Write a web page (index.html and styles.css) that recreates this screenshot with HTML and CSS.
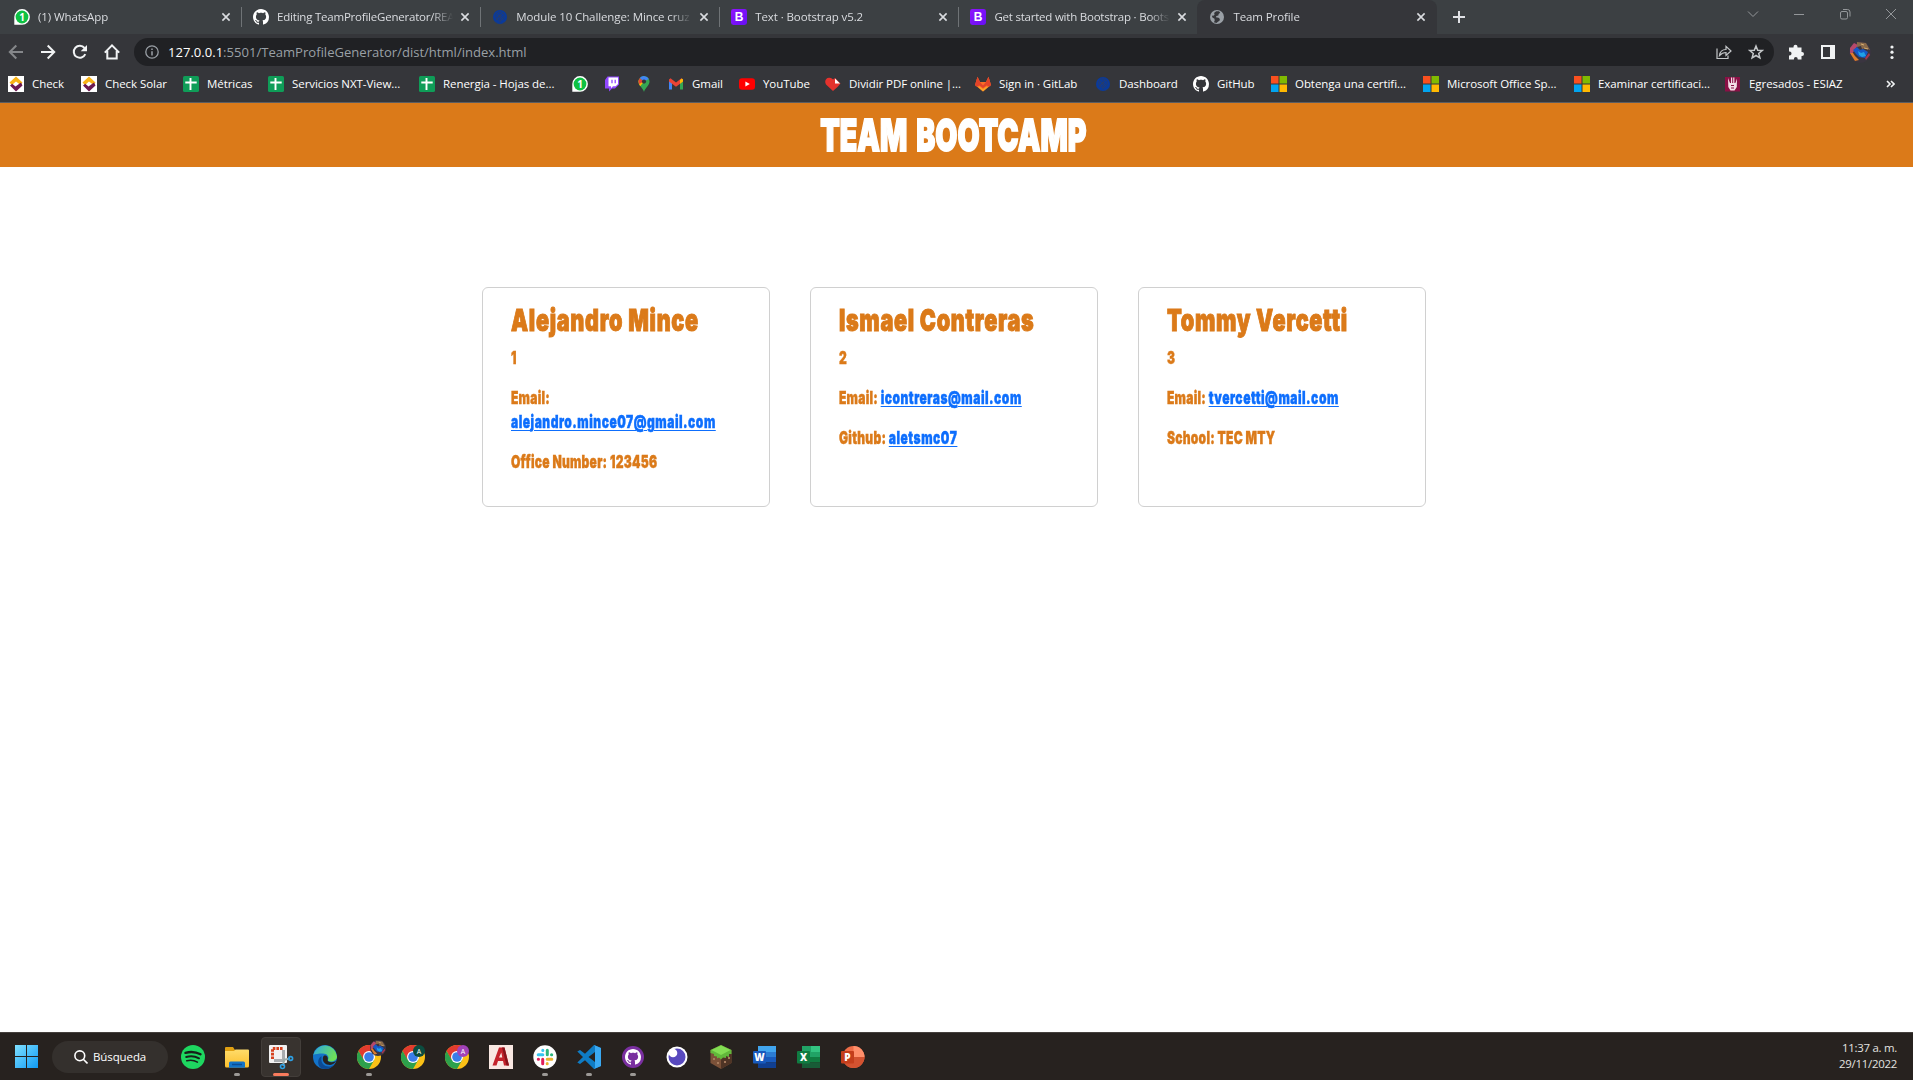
FILE: index.html
```html
<!DOCTYPE html>
<html lang="es">
<head>
<meta charset="utf-8">
<title>Team Profile</title>
<link rel="stylesheet" href="styles.css">
</head>
<body>
<svg class="defs" width="0" height="0" aria-hidden="true">
  <defs>
    <linearGradient id="gWin" x1="0" y1="0" x2="1" y2="1"><stop offset="0" stop-color="#7fe0ff"/><stop offset="1" stop-color="#0f9bf5"/></linearGradient>
    <linearGradient id="gEdge" x1="0" y1="0" x2="1" y2=".4"><stop offset="0" stop-color="#2aa5e6"/><stop offset="1" stop-color="#6de05a"/></linearGradient>
    <linearGradient id="gFold" x1="0" y1="0" x2="0" y2="1"><stop offset="0" stop-color="#ffdc6b"/><stop offset="1" stop-color="#fcbf2c"/></linearGradient>
    <linearGradient id="gBs" x1="0" y1="0" x2="1" y2="1"><stop offset="0" stop-color="#9013fe"/><stop offset="1" stop-color="#6610f2"/></linearGradient>
  </defs>
  <symbol id="wa" viewBox="0 0 16 16"><path d="M.3 15.700V8A7.800 7.800 0 1 1 8 15.700z" fill="#fff"/><circle cx="8" cy="8" r="6.400" fill="#0fc143"/></symbol>
  <symbol id="gh" viewBox="0 0 16 16"><path fill="currentColor" d="M8 0C3.58 0 0 3.58 0 8c0 3.54 2.29 6.53 5.47 7.59.4.07.55-.17.55-.38 0-.19-.01-.82-.01-1.49-2.01.37-2.53-.49-2.69-.94-.09-.23-.48-.94-.82-1.13-.28-.15-.68-.52-.01-.53.63-.01 1.08.58 1.23.82.72 1.21 1.87.87 2.33.66.07-.52.28-.87.51-1.07-1.78-.2-3.64-.89-3.64-3.95 0-.87.31-1.59.82-2.15-.08-.2-.36-1.02.08-2.12 0 0 .67-.21 2.2.82.64-.18 1.32-.27 2-.27s1.36.09 2 .27c1.53-1.04 2.2-.82 2.2-.82.44 1.1.16 1.92.08 2.12.51.56.82 1.27.82 2.15 0 3.07-1.87 3.75-3.65 3.95.29.25.54.73.54 1.48 0 1.07-.01 1.93-.01 2.2 0 .21.15.46.55.38A8.01 8.01 0 0 0 16 8c0-4.42-3.58-8-8-8z"/></symbol>
  <symbol id="tec" viewBox="0 0 16 16"><circle cx="8" cy="8" r="7" fill="#0a3a9b"/><g fill="none" stroke="#2b3d66" stroke-width=".7"><circle cx="8" cy="7" r="4.400"/><path d="M5 5l6 6M11 4l-7 7M8 3v11M5 9q3-5 6 0M3.500 13l2 1.500M12.500 13l-2 1.500"/></g></symbol>
  <symbol id="bs" viewBox="0 0 16 16"><rect width="16" height="16" rx="2.400" fill="url(#gBs)"/></symbol>
  <symbol id="globe" viewBox="0 0 16 16"><circle cx="8" cy="8" r="7" fill="#9aa0a6"/><path d="M7.200 2.300 10 2.200l1.200 1.600-1.600 1.300-.2 1.500-2 .5-.5 1.200 2.700.4 1.300 1.300-.4 1.700-1.600 1-1.400 1.400-2.700-.9.900-1.500-.2-2-2.100-1.300-.5-1.600L5 6.500l.6-1.200L5 4z" fill="#35363a"/></symbol>
  <symbol id="x" viewBox="0 0 10 10"><path d="M1.400 1.400l7.200 7.200M8.600 1.400 1.400 8.600" stroke="#dadce0" stroke-width="1.600"/></symbol>
  <symbol id="check" viewBox="0 0 16 16"><path d="M0 0h16v16H0z" fill="#fff"/><path d="M1.500 6.500 8 .4 14.500 6.500 12.500 9 8 5.600 4 9z" fill="#f9b316"/><path d="M2 9.500 4.200 7.800 7.500 10.500 13 6.500 14.500 9.500 8 15.600z" fill="#6d1a52"/></symbol>
  <symbol id="sheet" viewBox="0 0 16 16"><rect width="16" height="16" rx="1.600" fill="#0f9d58"/><path d="M2.300 6.500h11.400M7.500 2v12" stroke="#fff" stroke-width="1.900"/></symbol>
  <symbol id="ms" viewBox="0 0 16 16"><path d="M0 0h7.500v7.500H0z" fill="#f9501f"/><path d="M8.500 0H16v7.500H8.500z" fill="#80ba01"/><path d="M0 8.500h7.500V16H0z" fill="#02a4ef"/><path d="M8.500 8.500H16V16H8.500z" fill="#ffb902"/></symbol>
  <symbol id="chrome" viewBox="0 0 24 24"><circle cx="12" cy="12" r="12" fill="#fbc116"/><path d="M12 12 22.400 6A12 12 0 0 0 1.600 6l4.800 9z" fill="#e33b2e"/><path d="M1.600 6A12 12 0 0 0 12 24l5.200-9-5.200-3-5.200 3z" fill="#2da14c"/><circle cx="12" cy="12" r="6" fill="#fff"/><circle cx="12" cy="12" r="4.800" fill="#3b7de9"/></symbol>
  <symbol id="photo" viewBox="0 0 22 22"><circle cx="11" cy="11" r="11" fill="#3a3540"/><path d="M1 7 5 2l4 2-6 9-2-1z" fill="#b5486a"/><path d="M8 1l9 1 4 7-5-2-3 1-1-3-4 1z" fill="#8a6a4a"/><path d="M12 3l3 1M15 7l4 1" stroke="#d8b070" stroke-width="1"/><path d="M4 9l4-3 3 3 3-1 5 3-3 6-6-1-3-3z" fill="#1558c8"/><path d="M9 10l3 2 3-1 2 4-4 1-3-2z" fill="#1fa0e8"/><path d="M1 12l3 0 2 3 4 4-4 1z" fill="#e07b28"/><path d="M16 17l4-5 1 2-4 5z" fill="#a53650"/></symbol>
</svg>

<div class="browser">
  <div class="tabstrip">
    <div class="tab"><svg class="fav" viewBox="0 0 16 16"><use href="#wa"/><text class="wa-count" x="8" y="11.600">1</text></svg><span class="tab-title">(1) WhatsApp</span><svg class="close"><use href="#x"/></svg></div>
    <div class="tab"><svg class="fav white"><use href="#gh"/></svg><span class="tab-title tight">Editing TeamProfileGenerator/REA</span><svg class="close"><use href="#x"/></svg></div>
    <div class="tab"><svg class="fav"><use href="#tec"/></svg><span class="tab-title">Module 10 Challenge: Mince cruz</span><svg class="close"><use href="#x"/></svg></div>
    <div class="tab"><svg class="fav" viewBox="0 0 16 16"><use href="#bs"/><text class="bs-letter" x="8" y="12.200">B</text></svg><span class="tab-title">Text · Bootstrap v5.2</span><svg class="close"><use href="#x"/></svg></div>
    <div class="tab last"><svg class="fav" viewBox="0 0 16 16"><use href="#bs"/><text class="bs-letter" x="8" y="12.200">B</text></svg><span class="tab-title tight">Get started with Bootstrap · Boots</span><svg class="close"><use href="#x"/></svg></div>
    <div class="tab active"><svg class="fav"><use href="#globe"/></svg><span class="tab-title">Team Profile</span><svg class="close"><use href="#x"/></svg></div>
    <svg class="plus" viewBox="0 0 14 14"><path d="M7 1v12M1 7h12" stroke="#dfe1e5" stroke-width="2"/></svg>
    <div class="window-controls">
      <svg viewBox="0 0 12 12"><path d="M1 3.500l5 5 5-5"/></svg>
      <svg viewBox="0 0 12 12"><path d="M1 6.500h10"/></svg>
      <svg viewBox="0 0 12 12"><rect x="1.500" y="3.500" width="7" height="7.500" rx="1.500"/><path d="M4 1.500h4.500q2.500 0 2.500 2.500v4.500"/></svg>
      <svg viewBox="0 0 12 12"><path d="M1 1l10 10M11 1 1 11"/></svg>
    </div>
  </div>

  <div class="toolbar">
    <div class="nav">
      <svg class="dim" viewBox="0 0 16 16"><path d="M15 8H2M8.300 1.500 1.800 8l6.500 6.500"/></svg>
      <svg viewBox="0 0 16 16"><path d="M1 8h13M7.700 1.500 14.200 8l-6.500 6.500"/></svg>
      <svg viewBox="0 0 16 16"><path d="M13.300 10.200A6 6 0 1 1 12.500 4"/><path d="M15 1v6.300H8.700z" fill="#f1f3f4" stroke="none"/></svg>
      <svg viewBox="0 0 16 16"><path d="M.8 8.600 8 1.400l7.200 7.200M3.300 7v7.600h9.400V7"/></svg>
    </div>
    <div class="omnibox">
      <svg class="info" viewBox="0 0 14 14"><circle cx="7" cy="7" r="6.200" fill="none" stroke="#9aa0a6" stroke-width="1.300"/><path d="M7 6.200v4.300M7 3.400v1.500" stroke="#9aa0a6" stroke-width="1.500"/></svg>
      <span class="url"><b>127.0.0.1</b>:5501/TeamProfileGenerator/dist/html/index.html</span>
      <svg class="share" viewBox="0 0 16 16"><path d="M1 4.500v10h11v-3M3.500 11.500c.5-4 2.500-6 6.500-6V2.300l5 4.700-5 4.500V8.500c-3 0-4.500.8-6.500 3z"/></svg>
      <svg class="star" viewBox="0 0 16 16"><path d="M8 2l1.700 4.200 4.500.3-3.500 2.900 1.200 4.500L8 11.500l-3.900 2.400 1.200-4.500L1.800 6.500l4.500-.3z"/></svg>
    </div>
    <div class="actions">
      <svg viewBox="0 0 16 16"><path fill="#f1f3f4" d="M1 3.500h4.500v-.8a2 2 0 0 1 4 0v.8h4V8h.5a2 2 0 0 1 0 4h-.5v3.500H9.700V15a1.900 1.900 0 0 0-3.800 0v.5H1v-4h.6a1.900 1.900 0 0 0 0-3.900H1z"/></svg>
      <svg viewBox="0 0 16 16"><path fill="#f1f3f4" fill-rule="evenodd" d="M1 1h14v14H1zm2 2v10h7V3z"/></svg>
      <svg class="avatar"><use href="#photo"/></svg>
      <svg viewBox="0 0 16 16"><g fill="#f1f3f4"><circle cx="8" cy="3" r="1.600"/><circle cx="8" cy="8.200" r="1.600"/><circle cx="8" cy="13.500" r="1.600"/></g></svg>
    </div>
  </div>

  <div class="bookmarks">
    <div class="bm"><svg><use href="#check"/></svg><span>Check</span></div>
    <div class="bm"><svg><use href="#check"/></svg><span>Check Solar</span></div>
    <div class="bm"><svg><use href="#sheet"/></svg><span>Métricas</span></div>
    <div class="bm"><svg><use href="#sheet"/></svg><span>Servicios NXT-View...</span></div>
    <div class="bm"><svg><use href="#sheet"/></svg><span>Renergia - Hojas de...</span></div>
    <div class="bm"><svg viewBox="0 0 16 16"><use href="#wa"/><text class="wa-count" x="8" y="11.600">1</text></svg></div>
    <div class="bm"><svg viewBox="0 0 16 16"><path d="M3.500.5h11.500v8l-4 4H8l-3 3v-3H1V4z" fill="#9146ff"/><path d="M4.500 1.500H14V8l-2.300 2.300H9l-2 2v-2H4.500z" fill="#fff"/><path d="M8 3.800v3.500M11.200 3.800v3.500" stroke="#9146ff" stroke-width="1.300"/></svg></div>
    <div class="bm"><svg viewBox="0 0 16 16"><path d="M8 16C7 12 2.500 9.500 2.500 5.600A5.500 5.500 0 0 1 13.500 5.600C13.500 9.500 9 12 8 16z" fill="#34a853"/><path d="M2.900 3.500 8 5.600 4.200 10.200C3 8.500 2 6 2.900 3.500z" fill="#fbbc04"/><path d="M3.800 2 8 5.600 3 8Q1.800 4.500 3.800 2z" fill="#ea4335"/><path d="M3.800 2A5.500 5.500 0 0 1 12.800 3L8 5.600z" fill="#4285f4"/><circle cx="8" cy="5.600" r="2.100" fill="#35363a"/></svg></div>
    <div class="bm"><svg viewBox="0 0 16 16"><path d="M1 3.500v10h3V7z" fill="#4285f4"/><path d="M15 3.500v10h-3V7z" fill="#34a853"/><path d="M1 3.500 2.500 2.300 8 6.600l5.500-4.300L15 3.500v2L8 10.800 1 5.500z" fill="#ea4335"/><path d="M12 4v3.700l3-2.200v-2L13.800 2.500z" fill="#fbbc04"/></svg><span>Gmail</span></div>
    <div class="bm"><svg viewBox="0 0 16 16"><rect y="2.300" width="16" height="11.400" rx="3" fill="#f00"/><path d="M6.400 5.500v5L10.800 8z" fill="#fff"/></svg><span>YouTube</span></div>
    <div class="bm"><svg viewBox="0 0 16 16"><path d="M8 15 1 8.500C-1 5 1 1.500 4.500 1.800 6.500 2 7.500 3 8 3.600L10 2l5.500 5.500-3 3.500z" fill="#e5322d"/><path d="M10 2.500v5h5z" fill="#fff"/></svg><span>Dividir PDF online |...</span></div>
    <div class="bm"><svg viewBox="0 0 16 16"><path d="M0 9 2.500.8 5 6h6L13.500.8 16 9l-8 6.500z" fill="#fc6d26"/><path d="M0 9 2.500.8 5 6l3 3.500L11 6 13.500.8 16 9l-1 1.500-3.500-1L8 12 4.500 9.500 1 10.500z" fill="#e24329"/><path d="M3 11l5 4.500 5-4.500-1.500-.5L8 13l-3.500-2.500z" fill="#fca326"/></svg><span>Sign in · GitLab</span></div>
    <div class="bm"><svg><use href="#tec"/></svg><span>Dashboard</span></div>
    <div class="bm"><svg class="white"><use href="#gh"/></svg><span>GitHub</span></div>
    <div class="bm"><svg><use href="#ms"/></svg><span>Obtenga una certifi...</span></div>
    <div class="bm"><svg><use href="#ms"/></svg><span>Microsoft Office Sp...</span></div>
    <div class="bm"><svg><use href="#ms"/></svg><span>Examinar certificaci...</span></div>
    <div class="bm"><svg viewBox="0 0 16 16"><path d="M0 1h15v14.500H0z" fill="#8a1045"/><path d="M3 2l2 5h1V1.500h1.200V7h1V1.500h1.200V7h1L12 2.500 11.800 11 9.500 14.500h-4L3.300 11z" fill="#f3dde6"/><path d="M6 9.500h3M6 12h3" stroke="#8a1045"/></svg><span>Egresados - ESIAZ</span></div>
    <svg class="more" viewBox="0 0 9 8"><path d="M1 1l3 3-3 3M5 1l3 3-3 3"/></svg>
  </div>
</div>

<main class="page">
  <header class="banner"><h1>TEAM BOOTCAMP</h1></header>
  <section class="cards">
    <article class="card">
      <h2>Alejandro Mince</h2>
      <p>1</p>
      <p>Email:<br><a>alejandro.mince07@gmail.com</a></p>
      <p>Office Number: 123456</p>
    </article>
    <article class="card">
      <h2>Ismael Contreras</h2>
      <p>2</p>
      <p>Email: <a>icontreras@mail.com</a></p>
      <p>Github: <a>aletsmc07</a></p>
    </article>
    <article class="card">
      <h2>Tommy Vercetti</h2>
      <p>3</p>
      <p>Email: <a>tvercetti@mail.com</a></p>
      <p>School: TEC MTY</p>
    </article>
  </section>
</main>

<footer class="taskbar">
  <svg class="start" viewBox="0 0 23 23"><path fill="url(#gWin)" d="M0 0h11v11H0zM12 0h11v11H12zM0 12h11v11H0zM12 12h11v11H12z"/></svg>
  <div class="search"><svg viewBox="0 0 14 14"><circle cx="5.800" cy="5.800" r="4.900"/><path d="M9.300 9.300l4.200 4.200"/></svg><span>Búsqueda</span></div>
  <div class="apps">
    <div class="app"><svg viewBox="0 0 24 24"><circle cx="12" cy="12" r="12" fill="#1ed760"/><g fill="none" stroke="#17201a" stroke-linecap="round"><path d="M4.500 7.800q8-2.300 15 1.500" stroke-width="2.400"/><path d="M5.200 12q6.800-1.900 12.800 1.300" stroke-width="2"/><path d="M5.800 15.800q5.600-1.500 10.600 1.300" stroke-width="1.600"/></g></svg></div>
    <div class="app run"><svg viewBox="0 0 24 24"><path d="M0 3q0-1 1-1h7l2 3v4H0z" fill="#e0a012"/><path d="M0 6h9l1.500-1.500H23q1 0 1 1V21q0 1.500-1.500 1.500h-21Q0 22.500 0 21z" fill="url(#gFold)"/><path d="M4 22.800V18q0-1.500 1.500-1.500h13Q20 16.500 20 18v4.800z" fill="#1373c6"/><path d="M7 19.500h10" stroke="#0a4d94" stroke-width="1.500"/></svg></div>
    <div class="app sel"><svg viewBox="0 0 24 24"><rect y="0" width="18" height="18" rx="1" fill="#f2f2f2"/><path d="M3.500 14V3.500H14" fill="none" stroke="#d6421e" stroke-width="3" stroke-dasharray="2.600 1"/><path d="M14.500 5v10.500H5" fill="none" stroke="#a9adb0" stroke-width="3"/><path d="M14.500 15v6M14 15l7-1.500" stroke="#9aa" stroke-width="2"/><circle cx="13.500" cy="21.500" r="2" fill="none" stroke="#2da0e4" stroke-width="1.600"/><circle cx="21.700" cy="13.500" r="1.900" fill="none" stroke="#2da0e4" stroke-width="1.600"/></svg></div>
    <div class="app"><svg viewBox="0 0 24 24"><circle cx="12" cy="12" r="12" fill="#1373c9"/><path d="M.3 10A12 12 0 0 1 24 11.500c0 3.500-3 5-6 5-2.500 0-3.500-1-3-2 1.500-3-1-6-5-6C5.500 8.500 2 9 .3 10z" fill="url(#gEdge)"/><path d="M8.500 13c-1 5 3 8.500 7.500 8.500 2 0 4-.5 5.700-2.500A12 12 0 0 1 9 23.600C4 21 4 14 8.500 11z" fill="#0c4a93"/><path d="M10.500 11c2.500-1.500 5 1 4.200 3.800-.4 1.600 1.500 2.700 4.300 2.400 2-.3 3.200-.8 4.200-1.200-2 3.200-5.200 4.200-7.700 3.800-4.500-.5-7-5-5-8.800z" fill="#27221f"/></svg></div>
    <div class="app run"><svg class="over" viewBox="0 0 24 24"><use href="#chrome" width="24" height="24"/><use href="#photo" x="13" y="-5" width="16" height="16"/></svg></div>
    <div class="app"><svg class="over" viewBox="0 0 24 24"><use href="#chrome" width="24" height="24"/><circle cx="18" cy="6" r="6" fill="#0b4d40"/><text class="badge" x="18" y="8.600">A</text></svg></div>
    <div class="app"><svg class="over" viewBox="0 0 24 24"><use href="#chrome" width="24" height="24"/><circle cx="18" cy="6" r="6" fill="#a142b8"/><text class="badge" x="18" y="8.600">A</text></svg></div>
    <div class="app"><svg viewBox="0 0 24 24"><path d="M0 0h24v24H0z" fill="#f9e8e2"/><path d="M3.500 20.500 10 2.500h5.500l4.500 18h-5l-1-4.500H9l-1.500 4.500zM10 12.500h3.300l-1-5z" fill="#c4232b" fill-rule="evenodd"/><path d="M15.500 2.500l4.500 18h-2.500L13 2.500z" fill="#86131b"/></svg></div>
    <div class="app run"><svg viewBox="0 0 24 24"><circle cx="12" cy="12" r="11.700" fill="#fff"/><g stroke-width="3" stroke-linecap="round"><path d="M9.800 5.300v.2M5.200 9.700h4.600" stroke="#36c5f0"/><path d="M18.700 9.800h-.2M14.300 5.200v4.600" stroke="#2eb67d"/><path d="M14.200 18.700v-.2M18.800 14.300h-4.600" stroke="#ecb22e"/><path d="M5.300 14.200h.2M9.700 18.800v-4.600" stroke="#e01e5a"/></g></svg></div>
    <div class="app run"><svg viewBox="0 0 24 24"><path d="M17 0l7 3v18l-7 3L8 15.200 3 19 .3 17.500 6 12 .3 6.500 3 5l5 3.800zM18 7l-6.500 5L18 17z" fill="#0f7cc4" fill-rule="evenodd"/><path d="M17 0l7 3v18l-7 3 1-1.500V1.500z" fill="#3aa9f2"/></svg></div>
    <div class="app run"><svg class="gd" viewBox="0 0 24 24"><circle cx="12" cy="12" r="11" fill="#7a2fa0"/><use href="#gh" x="4" y="4" width="16" height="16"/></svg></div>
    <div class="app"><svg viewBox="0 0 24 24"><circle cx="12" cy="12" r="10.500" fill="#fff"/><circle cx="12" cy="12" r="8.500" fill="#5849be"/><circle cx="8" cy="8" r="4.300" fill="#fff"/></svg></div>
    <div class="app"><svg viewBox="0 0 24 24"><path d="M12 0l10.500 5v13L12 24 1.500 18V5z" fill="#7b5138"/><path d="M12 11v13l10.500-6V5z" fill="#4f3425"/><path d="M12 0l10.500 5v4L20 9v3l-3-1v2l-3-.5-2 2-2-2-2 1v-2L5 11V9L1.500 8V5z" fill="#62b83b"/><path d="M12 .5l9.500 4.500-9.500 5-9.500-5z" fill="#83dd53"/><path d="M4 13h2v2H4zM8 17h2v2H8zM15 16h2v2h-2zM19 12h2v2h-2z" fill="#a57a5c"/></svg></div>
    <div class="app"><svg viewBox="0 0 24 24"><path d="M5 1h18v6H5z" fill="#41a5ee"/><path d="M5 7h18v5.500H5z" fill="#2b7cd3"/><path d="M5 12h18v5.500H5z" fill="#185abd"/><path d="M5 17.500h18V23H5z" fill="#103f91"/><rect y="6" width="13" height="12.500" rx="1" fill="#185abd"/><text class="office" x="6.500" y="15.800">W</text></svg></div>
    <div class="app"><svg viewBox="0 0 24 24"><path d="M5 1h9.500v11H5z" fill="#21a366"/><path d="M14 1h9v6h-9z" fill="#33c481"/><path d="M14 7h9v5.500h-9z" fill="#21a366"/><path d="M5 12h18v5.500H5z" fill="#107c41"/><path d="M5 17.500h18V23H5z" fill="#185c37"/><rect y="6" width="13" height="12.500" rx="1" fill="#107c41"/><text class="office" x="6.500" y="15.800">X</text></svg></div>
    <div class="app"><svg viewBox="0 0 24 24"><circle cx="12.500" cy="12" r="11" fill="#ed6c47"/><path d="M12.500 1a11 11 0 0 1 11 11h-11z" fill="#ff8f6b"/><path d="M1.500 12a11 11 0 0 0 22 0z" fill="#d35230"/><rect y="6" width="13" height="12.500" rx="1" fill="#c43e1c"/><text class="office" x="6.500" y="15.800">P</text></svg></div>
  </div>
  <div class="clock"><span>11:37 a. m.</span><span>29/11/2022</span></div>
</footer>
</body>
</html>
```
FILE: styles.css
```css
* { box-sizing: border-box; }
body {
  margin: 0;
  width: 1913px;
  height: 1080px;
  overflow: hidden;
  display: flex;
  flex-direction: column;
  background: #fff;
  font-family: "Open Sans", "Noto Sans", sans-serif;
}
svg { display: block; flex: none; }
.defs { position: absolute; }
.white { color: #fff; }
.wa-count { font-size: 10px; font-weight: 700; fill: #fff; text-anchor: middle; }
.bs-letter { font-family: "Liberation Sans", sans-serif; font-size: 12px; font-weight: 700; fill: #fff; text-anchor: middle; }
.badge { font-size: 7px; fill: #fff; text-anchor: middle; }
.office { font-size: 10px; font-weight: 800; fill: #fff; text-anchor: middle; }

/* Browser chrome */
.browser {
  height: 103px;
  background: #35363a;
  border-bottom: 1px solid #5c5d60;
}
.tabstrip {
  height: 34px;
  display: flex;
  background: #3c4043;
  padding-left: 2px;
}
.tab {
  width: 239.1px;
  height: 34px;
  padding: 0 10px 7px 12px;
  display: flex;
  align-items: center;
  position: relative;
}
.tab:not(.last):not(.active)::after {
  content: "";
  position: absolute;
  right: -1px;
  top: 7px;
  width: 1px;
  height: 20px;
  background: #6f7376;
}
.tab.active {
  background: #35363a;
  border-radius: 8px 8px 0 0;
  width: 240px;
}
.fav { width: 16px; height: 16px; margin-top: 7px; }
.tab-title {
  margin: 7px 0 0 8px;
  width: 176px;
  white-space: nowrap;
  font-size: 11.5px;
  line-height: 18px;
  letter-spacing: -0.1px;
  color: #dadce0;
  -webkit-mask-image: linear-gradient(90deg, #000 155px, transparent 176px);
  mask-image: linear-gradient(90deg, #000 155px, transparent 176px);
}
.tab-title.tight { letter-spacing: -0.22px; }
.close { width: 10px; height: 10px; margin: 7px 0 0 7px; }
.plus { width: 14px; height: 14px; margin: 10px 0 0 15px; }
.window-controls {
  margin: 8px 16px 0 auto;
  display: flex;
  gap: 34px;
}
.window-controls svg {
  width: 12px;
  height: 12px;
  fill: none;
  stroke: #94979a;
  stroke-width: 1;
}
.toolbar {
  height: 36px;
  display: flex;
  align-items: center;
  padding-left: 8px;
}
.nav { display: flex; gap: 16px; width: 126px; }
.nav svg { width: 16px; height: 16px; fill: none; stroke: #f1f3f4; stroke-width: 2; }
.nav .dim { stroke: #85878a; }
.omnibox {
  width: 1640px;
  height: 28px;
  border-radius: 14px;
  background: #202124;
  display: flex;
  align-items: center;
  padding: 0 10px 0 11px;
}
.info { width: 14px; height: 14px; }
.url {
  margin-left: 9px;
  flex: 1;
  font-size: 13.07px;
  line-height: 20px;
  color: #9aa0a6;
  white-space: nowrap;
}
.url b { font-weight: 400; color: #fff; }
.share, .star { width: 16px; height: 16px; fill: none; stroke: #c4c7c9; stroke-width: 1.2; }
.star { margin-left: 16px; stroke-width: 1.5; }
.actions { display: flex; align-items: center; margin-left: 14px; gap: 16px; }
.actions svg { width: 16px; height: 16px; }
.actions .avatar { width: 22px; height: 22px; margin: 0 -3px; }
.bookmarks {
  height: 28px;
  padding-left: 8px;
  display: grid;
  grid-template-columns: 73px 102px 85px 151px 153px 32px 32px 32px 71px 86px 150px 120px 98px 78px 152px 151px 151px 161px 9px;
  align-items: center;
}
.bm { display: flex; align-items: center; gap: 8px; }
.bm svg { width: 16px; height: 16px; }
.bm span {
  font-size: 11.5px;
  line-height: 18px;
  letter-spacing: -0.06px;
  color: #fff;
  white-space: nowrap;
}
.more { width: 9px; height: 8px; fill: none; stroke: #f1f3f4; stroke-width: 1.6; }

/* Page: a heavy sans squeezed horizontally for the poster-style lettering */
.page {
  flex: 1;
  color: #db7a19;
  font-family: Inter, "Open Sans", sans-serif;
  font-weight: 900;
}
.banner {
  height: 64px;
  padding-right: 6px;
  background: #db7a19;
  color: #fff;
  display: flex;
  justify-content: center;
  align-items: center;
}
h1, h2, p { margin: 0; white-space: nowrap; }
h1 {
  font-size: 44.5px;
  font-weight: 900;
  line-height: 54px;
  word-spacing: 5px;
  -webkit-text-stroke: 1.8px currentColor;
  transform: scaleX(0.642);
}
.cards {
  margin-top: 120px;
  padding: 0 5px 0 0;
  display: flex;
  justify-content: center;
  gap: 40px;
}
.card {
  width: 288px;
  height: 220px;
  border: 1px solid #d0d0d0;
  border-radius: 6px;
  padding: 14px 28px;
}
.card h2 {
  font-size: 30px;
  font-weight: 900;
  line-height: 36px;
  margin-bottom: 8px;
  letter-spacing: 0.95px;
  -webkit-text-stroke: 1px currentColor;
  transform: scaleX(0.72);
  transform-origin: left;
}
.card p {
  font-size: 18px;
  line-height: 24px;
  margin-bottom: 16px;
  letter-spacing: 0.35px;
  -webkit-text-stroke: 0.4px currentColor;
  transform: scaleX(0.67);
  transform-origin: left;
}
.card a {
  color: #0d6efd;
  letter-spacing: 0.75px;
  text-decoration: underline;
  text-decoration-thickness: 1px;
  text-underline-offset: 2px;
}

/* Taskbar */
.taskbar {
  height: 48px;
  background: #27221f;
  border-top: 1px solid #45403d;
  display: flex;
  align-items: center;
  padding: 0 16px 0 15px;
}
.start { width: 23px; height: 23px; }
.search {
  width: 116px;
  height: 32px;
  margin-left: 14px;
  border-radius: 16px;
  background: #34302d;
  display: flex;
  align-items: center;
  padding-left: 22px;
  font-size: 11.5px;
  letter-spacing: -0.1px;
  color: #fff;
}
.search svg { width: 14px; height: 14px; margin-right: 5px; fill: none; stroke: #fff; stroke-width: 1.6; }
.apps { display: flex; gap: 4px; margin-left: 5px; }
.app {
  width: 40px;
  height: 40px;
  display: flex;
  align-items: center;
  justify-content: center;
  position: relative;
  border-radius: 4px;
}
.app svg { width: 24px; height: 24px; overflow: visible; }
.app .gd { color: #fff; }
.sel { background: #38332f; border: 1px solid #433e3a; }
.run::after, .sel::after {
  content: "";
  position: absolute;
  left: 17px;
  bottom: 1px;
  width: 6px;
  height: 3px;
  border-radius: 2px;
  background: #9c9996;
}
.sel::after { left: 11px; bottom: 0; width: 16px; background: #f97c5d; }
.clock {
  margin: 0 0 2px auto;
  display: flex;
  flex-direction: column;
  align-items: flex-end;
  font-size: 11.4px;
  line-height: 16px;
  letter-spacing: -0.25px;
  color: #e4e2e0;
}
```
